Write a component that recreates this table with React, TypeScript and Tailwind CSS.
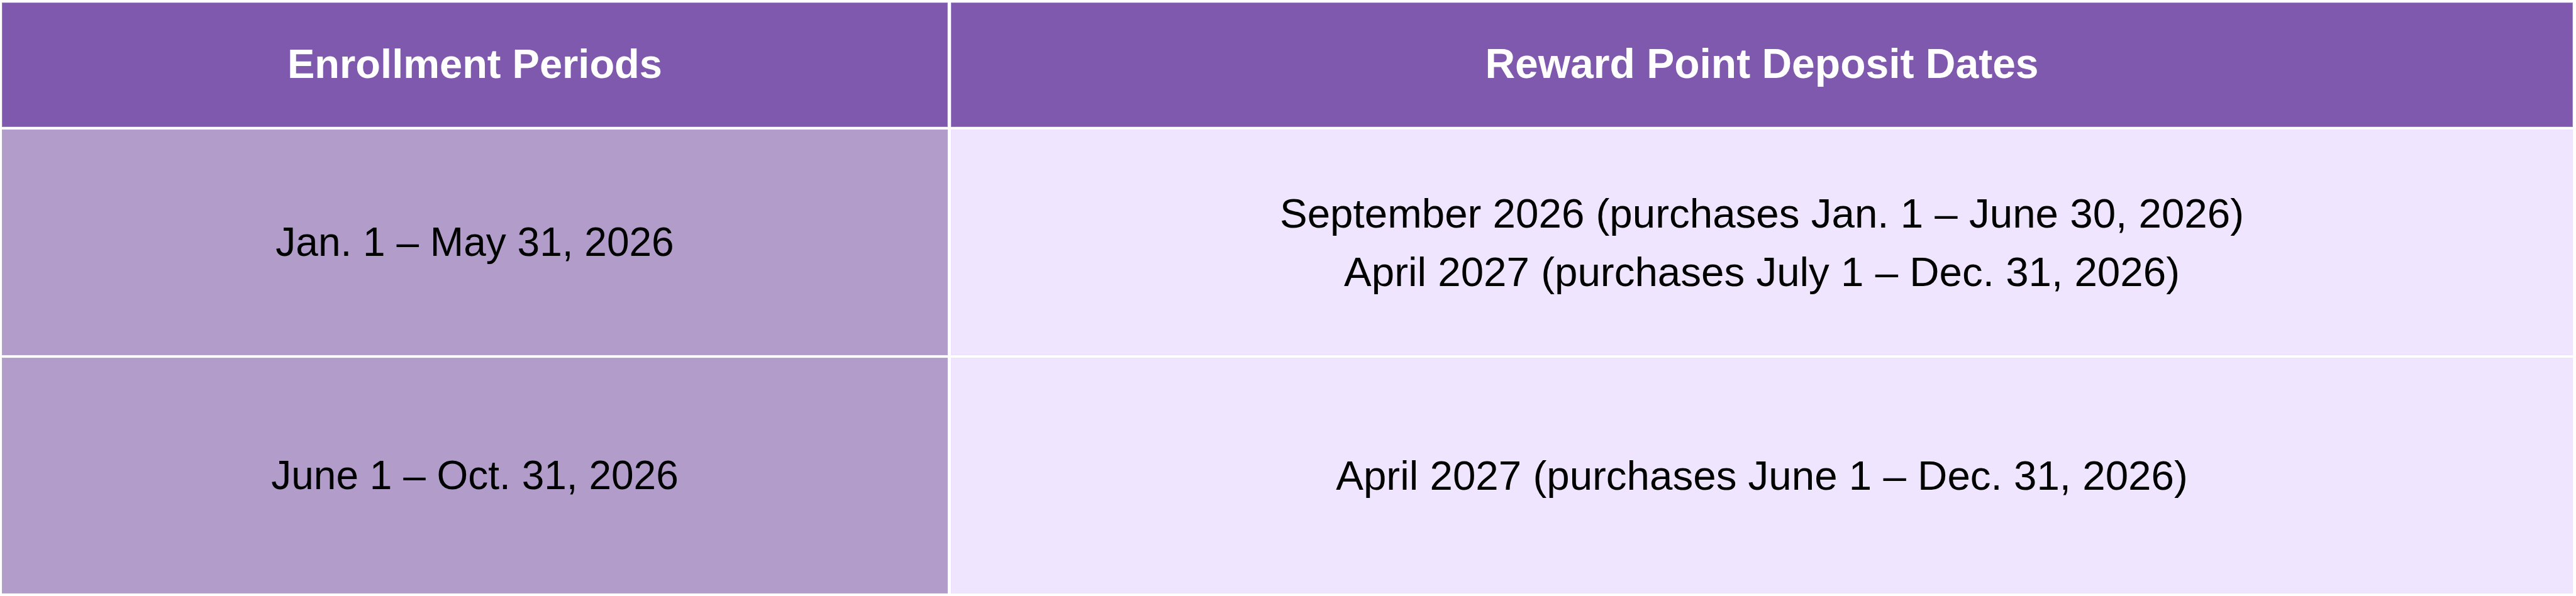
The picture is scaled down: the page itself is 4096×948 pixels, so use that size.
import React from "react";

const font = { fontFamily: '"Liberation Sans", Arial, sans-serif' };

export default function App() {
  return (
    <div className="w-[4096px] h-[948px] bg-white pl-[3px] pt-[4px]" style={font}>
      <div className="grid grid-cols-[1504px_2579px] grid-rows-[198px_359px_375px] gap-x-[5px] gap-y-[4px]">
        <div className="flex items-center justify-center bg-[#7e59ad] border border-[#9a80c2] text-white font-bold text-[65px] leading-none pb-[4px]">
          Enrollment Periods
        </div>
        <div className="flex items-center justify-center bg-[#7e59ad] border border-[#9a80c2] text-white font-bold text-[66px] leading-none pb-[4px]">
          Reward Point Deposit Dates
        </div>

        <div className="flex items-center justify-center bg-[#b19cca] border border-[#b7a1d3] text-black text-[64px] leading-[93px]">
          Jan. 1 – May 31, 2026
        </div>
        <div className="flex flex-col items-center justify-center bg-[#efe5ff] border border-[#ece0fd] text-black text-[65.5px] leading-[93px] text-center">
          <div>September 2026 (purchases Jan. 1 – June 30, 2026)</div>
          <div>April 2027 (purchases July 1 – Dec. 31, 2026)</div>
        </div>

        <div className="flex items-center justify-center bg-[#b19cca] border border-[#b7a1d3] text-black text-[64px] leading-[93px]">
          June 1 – Oct. 31, 2026
        </div>
        <div className="flex items-center justify-center bg-[#efe5ff] border border-[#ece0fd] text-black text-[65.5px] leading-[93px]">
          April 2027 (purchases June 1 – Dec. 31, 2026)
        </div>
      </div>
    </div>
  );
}
